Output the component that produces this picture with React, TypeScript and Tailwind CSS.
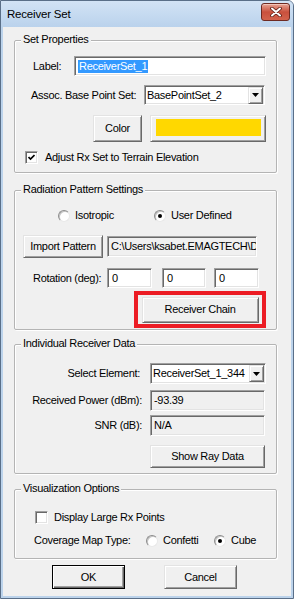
import React from 'react';

const sunken =
  'border border-t-[#a0a0a0] border-l-[#a0a0a0] border-r-white border-b-white shadow-[inset_1px_1px_0_#696969,inset_-1px_-1px_0_#e3e3e3]';
const raised =
  'border border-t-[#e3e3e3] border-l-[#e3e3e3] border-r-[#696969] border-b-[#696969] shadow-[inset_1px_1px_0_#ffffff,inset_-1px_-1px_0_#a0a0a0]';

function Group({
  title,
  className,
  children,
}: {
  title: string;
  className: string;
  children: React.ReactNode;
}) {
  return (
    <div
      className={`relative ml-[11px] flex w-[263px] flex-col rounded-[2px] border border-[#b4b4b4] shadow-[inset_1px_1px_0_#ffffff,1px_1px_0_#ffffff] ${className}`}
    >
      <span className="absolute -top-[8px] left-[6px] bg-[#f0f0f0] px-[2px] leading-[13px]">
        {title}
      </span>
      {children}
    </div>
  );
}

function Field({
  className,
  children,
  grey,
}: {
  className: string;
  children?: React.ReactNode;
  grey?: boolean;
}) {
  return (
    <div
      className={`flex items-center overflow-hidden whitespace-nowrap pl-[3px] ${sunken} ${grey ? 'bg-[#f0f0f0]' : 'bg-white'} ${className}`}
    >
      {children}
    </div>
  );
}

function Dropdown({ value, className }: { value: string; className: string }) {
  return (
    <div className={`flex items-center bg-white ${sunken} ${className}`}>
      <span className="flex-1 truncate pl-[2px]">{value}</span>
      <div
        className={`mr-[1px] flex h-[17px] w-[15px] items-center justify-center bg-[#f0f0f0] ${raised}`}
      >
        <svg width="7" height="4" viewBox="0 0 7 4">
          <path d="M0 0h7L3.5 4z" fill="#000" />
        </svg>
      </div>
    </div>
  );
}

function Btn({
  className,
  children,
  primary,
}: {
  className: string;
  children: React.ReactNode;
  primary?: boolean;
}) {
  return (
    <button
      type="button"
      className={`flex items-center justify-center bg-[#f0f0f0] ${
        primary
          ? 'border border-black shadow-[inset_1px_1px_0_#ffffff,inset_-1px_-1px_0_#696969,inset_-2px_-2px_0_#a0a0a0]'
          : raised
      } ${className}`}
    >
      {children}
    </button>
  );
}

function Radio({ checked }: { checked?: boolean }) {
  return (
    <span className="flex h-[12px] w-[12px] shrink-0 items-center justify-center rounded-full border border-t-[#8c8c8c] border-l-[#8c8c8c] border-r-[#e8e8e8] border-b-[#e8e8e8] bg-white shadow-[inset_1px_1px_0_#c4c4c4]">
      {checked && <span className="h-[4px] w-[4px] rounded-full bg-black" />}
    </span>
  );
}

function Check({ checked }: { checked?: boolean }) {
  return (
    <span
      className={`flex h-[13px] w-[13px] shrink-0 items-center justify-center bg-white ${sunken}`}
    >
      {checked && (
        <svg width="7" height="7" viewBox="0 0 7 7">
          <path d="M0.5 3l2 2L6.5 1" stroke="#000" strokeWidth="1.7" fill="none" />
        </svg>
      )}
    </span>
  );
}

export default function App() {
  return (
    <div className="flex h-[599px] w-[294px] flex-col rounded-tr-[6px] border border-[#5a6f88] bg-[#bcd3eb] font-['Liberation_Sans',Arial,sans-serif] text-[11px] leading-[13px] tracking-[-0.3px] text-black">
      {/* title bar */}
      <div className="flex h-[26px] items-start justify-between rounded-tr-[5px] bg-gradient-to-b from-[#d2e3f5] to-[#bad2ec]">
        <span className="ml-[6px] mt-[7px] text-[11.5px] tracking-[-0.2px]">Receiver Set</span>
        <div className="mr-[3px] mt-[2px] flex h-[18px] w-[29px] items-center justify-center rounded-[3px] border border-[#6e2a22] bg-gradient-to-b from-[#e6a293] via-[#c9503d] to-[#d2624c] shadow-[inset_0_1px_0_#f3c4b8]">
          <svg width="12" height="10" viewBox="0 0 12 10">
            <path
              d="M2 1.5L10 8.5M10 1.5L2 8.5"
              stroke="#5a1a12"
              strokeWidth="3.6"
              strokeLinecap="round"
            />
            <path
              d="M2 1.5L10 8.5M10 1.5L2 8.5"
              stroke="#ffffff"
              strokeWidth="2"
              strokeLinecap="round"
            />
          </svg>
        </div>
      </div>

      {/* client area */}
      <div className="mx-[2px] mb-[2px] flex flex-1 flex-col bg-[#f0f0f0]">
        <Group title="Set Properties" className="mt-[13px] h-[133px] pt-[15px]">
          <div className="flex h-[20px] items-center">
            <span className="ml-[18px] w-[41px]">Label:</span>
            <Field className="h-[20px] w-[192px]">
              <span className="bg-[#3399ff] px-[1px] text-white">ReceiverSet_1</span>
            </Field>
          </div>
          <div className="mt-[9px] flex h-[20px] items-center">
            <span className="ml-[16px] w-[113px]">Assoc. Base Point Set:</span>
            <Dropdown value="BasePointSet_2" className="h-[20px] w-[121px]" />
          </div>
          <div className="mt-[10px] flex h-[27px] items-center">
            <Btn className="ml-[78px] h-[27px] w-[49px]">Color</Btn>
            <div
              className={`ml-[8px] flex h-[27px] w-[116px] pb-[5px] pl-[5px] pr-[4px] pt-[3px] ${raised}`}
            >
              <div className="flex-1 bg-[#ffd800]" />
            </div>
          </div>
          <div className="mt-[9px] flex h-[13px] items-center">
            <span className="ml-[10px]">
              <Check checked />
            </span>
            <span className="ml-[7px]">Adjust Rx Set to Terrain Elevation</span>
          </div>
        </Group>

        <Group title="Radiation Pattern Settings" className="mt-[17px] h-[140px] pt-[18px]">
          <div className="flex h-[13px] items-center">
            <span className="ml-[43px] flex w-[96px] items-center gap-[5px]">
              <Radio />
              Isotropic
            </span>
            <span className="flex items-center gap-[5px]">
              <Radio checked />
              User Defined
            </span>
          </div>
          <div className="mt-[13px] flex h-[23px] items-center">
            <Btn className="ml-[8px] h-[23px] w-[80px]">Import Pattern</Btn>
            <Field grey className="ml-[4px] h-[21px] w-[150px]">
              C:\Users\ksabet.EMAGTECH\D
            </Field>
          </div>
          <div className="mt-[10px] flex h-[20px] items-center">
            <span className="ml-[18px] w-[74px]">Rotation (deg):</span>
            <Field className="h-[20px] w-[45px] pl-[4px]">0</Field>
            <Field className="ml-[10px] h-[20px] w-[44px] pl-[4px]">0</Field>
            <Field className="ml-[8px] h-[20px] w-[45px] pl-[4px]">0</Field>
          </div>
          <div className="ml-[119px] mt-[3px] flex h-[37px] w-[132px] items-center justify-center border-4 border-[#ec1c24]">
            <Btn className="h-[26px] w-[117px]">Receiver Chain</Btn>
          </div>
        </Group>

        <Group title="Individual Receiver Data" className="mt-[14px] h-[130px] pt-[18px]">
          <div className="flex h-[21px] items-center">
            <span className="w-[127px] pr-[2px] text-right">Select Element:</span>
            <Dropdown value="ReceiverSet_1_344" className="ml-[8px] h-[21px] w-[116px]" />
          </div>
          <div className="mt-[6px] flex h-[21px] items-center">
            <span className="w-[127px] text-right">Received Power (dBm):</span>
            <Field grey className="ml-[8px] h-[21px] w-[115px]">
              -93.39
            </Field>
          </div>
          <div className="mt-[4px] flex h-[21px] items-center">
            <span className="w-[127px] text-right">SNR (dB):</span>
            <Field grey className="ml-[8px] h-[21px] w-[115px]">
              N/A
            </Field>
          </div>
          <div className="mt-[9px] flex">
            <Btn className="ml-[135px] h-[23px] w-[115px]">Show Ray Data</Btn>
          </div>
        </Group>

        <Group title="Visualization Options" className="mt-[15px] h-[70px] pt-[21px]">
          <div className="flex h-[13px] items-center">
            <span className="ml-[20px]">
              <Check />
            </span>
            <span className="ml-[6px]">Display Large Rx Points</span>
          </div>
          <div className="mt-[10px] flex h-[13px] items-center">
            <span className="ml-[19px] w-[112px]">Coverage Map Type:</span>
            <span className="flex w-[68px] items-center gap-[5px]">
              <Radio />
              Confetti
            </span>
            <span className="flex items-center gap-[5px]">
              <Radio checked />
              Cube
            </span>
          </div>
        </Group>

        <div className="mt-[6px] flex h-[24px]">
          <Btn primary className="ml-[49px] h-[24px] w-[73px]">
            OK
          </Btn>
          <Btn className="ml-[39px] h-[24px] w-[73px]">Cancel</Btn>
        </div>
      </div>
    </div>
  );
}
